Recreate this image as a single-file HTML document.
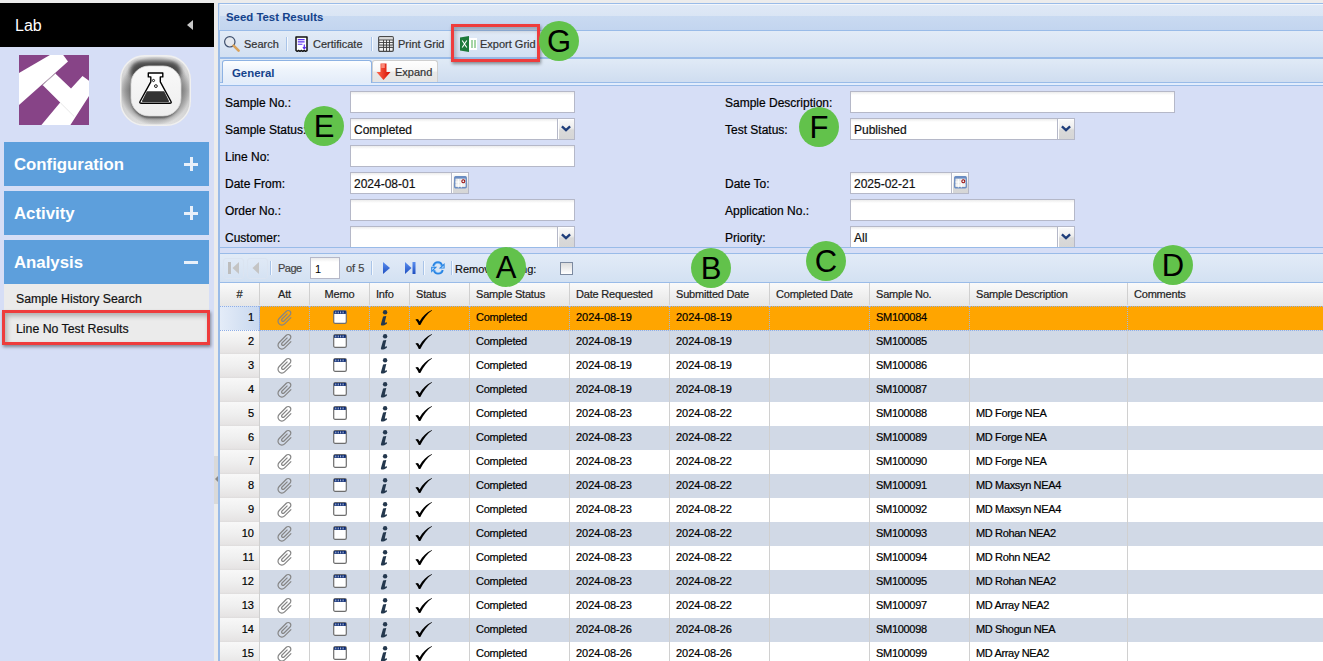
<!DOCTYPE html>
<html><head><meta charset="utf-8">
<style>
*{box-sizing:border-box}
html,body{margin:0;padding:0}
body{width:1323px;height:661px;overflow:hidden;position:relative;background:#ececec;font-family:"Liberation Sans",sans-serif;}
.a{position:absolute}
.hl{position:absolute;height:1px;background:#99bbe8}
/* sidebar */
#side{position:absolute;left:0;top:3px;width:214px;height:658px;background:#d6def6}
.acc{position:absolute;left:4px;width:205px;height:44px;background:#5d9fdc;color:#fff;font-weight:bold;font-size:16.8px}
.acc .t{position:absolute;left:10px;top:13px;line-height:20px}
.acc .pl{position:absolute;left:180px;top:15px;width:14px;height:14px}
.acc .pl:before{content:"";position:absolute;left:0;top:5.5px;width:14px;height:3px;background:#e8f0fa}
.acc .pl.plus:after{content:"";position:absolute;left:5.5px;top:0;width:3px;height:14px;background:#e8f0fa}
.mi{position:absolute;left:4px;width:205px;background:#ebebeb;color:#111;font-size:12.3px}
.mi .t{position:absolute;left:12px;line-height:15px}
.tb{position:absolute;font-size:11px;color:#333;line-height:13px;white-space:nowrap}
.tsep{position:absolute;width:2px;border-left:1px solid #a9c4e8;border-right:1px solid #f4f8fd}
.lb{position:absolute;font-size:12px;color:#000;line-height:14px;white-space:nowrap}
.in{position:absolute;height:22px;background:#fff linear-gradient(#ececec 0,#fff 3px);border:1px solid #b5b8c8;font-size:12px;color:#111;line-height:14px;padding:4px 0 0 3px;white-space:nowrap}
.trig{position:absolute;top:-1px;right:-1px;width:18px;height:22px;border:1px solid #b5b8c8;background:linear-gradient(#fbfbfb 0,#ededed 45%,#d9d9d9 55%,#d6d6d6 100%);box-shadow:inset 1px 1px 0 #fff}

.cal{position:absolute;top:-1px;width:18px;height:22px;border:1px solid #b5b8c8;background:linear-gradient(#fbfbfb 0,#ededed 45%,#d9d9d9 55%,#d6d6d6 100%);box-shadow:inset 1px 1px 0 #fff}
.hc{position:absolute;top:283px;height:22px;font-size:11px;color:#222;line-height:13px;padding-top:5px;white-space:nowrap;letter-spacing:-0.2px}
.hsep{position:absolute;top:283px;width:1px;height:22px;background:#d0d0d0}
.row{position:absolute;left:220px;width:1103px;height:24px}
.row.wht{background:#fff}
.row.alt{background:#d1d9e6}
.row.sel{background:#ffa500}
.rn{position:absolute;left:0;top:0;width:39px;height:24px;background:linear-gradient(#f8f8f8 0,#efefef 50%,#e6e4e4 92%,#dedcdc 100%)}
.sel .rn{background:linear-gradient(90deg,#e4ecf8,#c8d8ef)}
.rn span{position:absolute;right:5px;top:5px;font-size:11px;line-height:13px;color:#000}
.cl{position:absolute;top:0;width:1px;height:24px;background:#d0d0d0}
.tx{position:absolute;top:5px;font-size:11px;line-height:13px;color:#000;white-space:nowrap}
.ic{position:absolute}
.tx,.hc,.lb,.in,.tb,.rn span,.mi .t{-webkit-text-stroke:0.2px currentColor}
.co{position:absolute;width:40px;height:40px;border-radius:50%;background:#62c24b;color:#000;font-size:31px;line-height:42px;text-align:center}
.rbox{position:absolute;border:3px solid #ee3c3c;box-shadow:1px 2px 3px rgba(0,0,0,.4), inset 2px 3px 5px rgba(0,0,0,.26)}
</style></head><body>
<!-- ===== SIDEBAR ===== -->
<div id="side">
  <div class="a" style="left:0;top:0;width:214px;height:44px;background:#000"></div>
  <div class="a" style="left:15px;top:14px;color:#fff;font-size:16px;line-height:18px">Lab</div>
  <div class="a" style="left:187px;top:17px;width:0;height:0;border-top:5px solid transparent;border-bottom:5px solid transparent;border-right:6px solid #c8c8c8"></div>
  <svg class="a" style="left:19px;top:52px" width="70" height="70" viewBox="0 0 70 70">
    <rect width="70" height="70" fill="#874487"/>
    <path d="M0 17.9 L30.9 0 L44.2 0 L49 6.4 L0 50 Z" fill="#fff"/>
    <path d="M36.3 18.5 L52 33.6 L63.5 20.9 L70 25.8 L70 40.9 L51.4 70 L22.4 70 L41.2 47.6 L23.6 30 Z" fill="#fff"/>
    <path d="M23.6 30 L36.3 18.5" stroke="#bbb" stroke-width="1"/>
    <path d="M41.2 47.6 L55.2 61.5" stroke="#ddd" stroke-width="0.7"/>
  </svg>
  <svg class="a" style="left:120px;top:52px" width="71" height="71" viewBox="0 0 71 71">
    <defs>
      <filter id="bl" x="-30%" y="-30%" width="160%" height="160%"><feGaussianBlur stdDeviation="2.2"/></filter>
      <filter id="bl2" x="-30%" y="-30%" width="160%" height="160%"><feGaussianBlur stdDeviation="1.3"/></filter>
      <linearGradient id="inn" x1="0" y1="0" x2="0" y2="1"><stop offset="0" stop-color="#f9f9f9"/><stop offset="1" stop-color="#eeeeee"/></linearGradient>
      <linearGradient id="ring" x1="0" y1="0" x2="0" y2="1"><stop offset="0" stop-color="#dcdcdc"/><stop offset="0.5" stop-color="#a4a4a4"/><stop offset="1" stop-color="#d0d0d0"/></linearGradient>
      <radialGradient id="ring2" cx="0.5" cy="0.5" r="0.5"><stop offset="0.72" stop-color="#000" stop-opacity="0.25"/><stop offset="1" stop-color="#fff" stop-opacity="0.35"/></radialGradient>
      <clipPath id="oc"><rect x="0.5" y="0.5" width="70" height="70" rx="24"/></clipPath>
    </defs>
    <rect x="0.5" y="0.5" width="70" height="70" rx="24" fill="url(#ring)"/>
    <rect x="0.5" y="0.5" width="70" height="70" rx="24" fill="url(#ring2)"/>
    <g clip-path="url(#oc)">
      <rect x="10" y="6" width="51" height="20" rx="10" fill="#303030" opacity="0.8" filter="url(#bl)"/>
      <rect x="11.5" y="14" width="48" height="49" rx="18" fill="#303030" opacity="0.75" filter="url(#bl2)"/>
    </g>
    <rect x="0.7" y="0.7" width="69.6" height="69.6" rx="24" fill="none" stroke="#f0f0f0" stroke-width="1.4"/>
    <rect x="11" y="11" width="50" height="50" rx="18" fill="url(#inn)" stroke="#d8d8d8" stroke-width="0.8"/>
    <path d="M28.3 18 H42.8 V21.9 H40.3 V26.8 L51 46.5 C51.6 47.7 51 48.3 49.8 48.3 H21.3 C20 48.3 19.4 47.7 20 46.5 L30.8 26.8 V21.9 H28.3 Z" fill="#fff" stroke="#000" stroke-width="1.4" stroke-linejoin="round"/>
    <path d="M26.9 36.2 H44.2 L48.9 45.8 C49.2 46.5 49 46.9 48.3 46.9 H22.7 C22 46.9 21.8 46.5 22.1 45.8 Z" fill="#333"/>
    <circle cx="33.5" cy="25.5" r="1.1" fill="none" stroke="#000" stroke-width="0.9"/>
    <circle cx="35.9" cy="31.1" r="1.4" fill="none" stroke="#000" stroke-width="0.9"/>
  </svg>
  <div class="acc" style="top:139px"><div class="t">Configuration</div><div class="pl plus"></div></div>
  <div class="acc" style="top:188px"><div class="t">Activity</div><div class="pl plus"></div></div>
  <div class="acc" style="top:237px"><div class="t">Analysis</div><div class="pl"></div></div>
  <div class="mi" style="top:281px;height:26px"><div class="t" style="top:8px">Sample History Search</div></div>
  <div class="mi" style="top:307px;height:34px"><div class="t" style="top:12px">Line No Test Results</div></div>
  <div class="rbox" style="left:2px;top:307px;width:208px;height:35px"></div>
</div>
<!-- splitter -->
<div class="a" style="left:214px;top:3px;width:4px;height:658px;background:#ececec"></div>
<div class="a" style="left:214px;top:456px;width:4px;height:48px;background:#d9d9d9"></div>
<div class="a" style="left:215px;top:476px;width:0;height:0;border-top:3.5px solid transparent;border-bottom:3.5px solid transparent;border-right:3px solid #8a8a8a"></div>
<!-- ===== MAIN ===== -->
<div class="a" style="left:218px;top:3px;width:2px;height:658px;background:#99bbe8"></div>
<div class="a" style="left:220px;top:3px;width:1103px;height:658px;background:#d6def6"></div>
<!-- title -->
<div class="hl" style="left:220px;top:3px;width:1103px"></div>
<div class="a" style="left:220px;top:4px;width:1103px;height:26px;background:linear-gradient(#dfe9f6 0,#dae5f4 45%,#c9daf1 46%,#c3d5ef 100%)"></div>
<div class="a" style="left:219px;top:4px;width:1104px;height:1px;background:#f2f6fc"></div>
<div class="a" style="left:219px;top:4px;width:1px;height:26px;background:#d0e0f4"></div>
<div class="hl" style="left:220px;top:30px;width:1103px"></div>
<div class="a" style="left:226px;top:11px;font-weight:bold;color:#15428b;font-size:11.4px;line-height:13px">Seed Test Results</div>
<!-- toolbar -->
<div class="a" style="left:220px;top:31px;width:1103px;height:26px;background:linear-gradient(#e2ebf7,#d2e0f2)"></div>
<div class="hl" style="left:220px;top:57px;width:1103px;height:2px"></div>
<svg class="ic" style="left:223px;top:35px" width="18" height="18" viewBox="0 0 18 18"><circle cx="6.8" cy="6.8" r="5.2" fill="#e4e8ee" stroke="#3e4f6d" stroke-width="1.2"/><path d="M10.6 10.6 L15.6 15.6" stroke="#d9a25a" stroke-width="2.6" stroke-linecap="round"/></svg>
<div class="tb" style="left:244px;top:38px">Search</div>
<div class="tsep" style="left:286px;top:37px;height:14px"></div>
<svg class="ic" style="left:295px;top:36px" width="13" height="16" viewBox="0 0 13 16"><path d="M1 1 H12 V14.5 L10.6 15.3 L9.2 14.5 L7.8 15.3 L6.4 14.5 L5 15.3 L3.6 14.5 L2.2 15.3 L1 14.5 Z" fill="#fff" stroke="#111" stroke-width="1.5" stroke-linejoin="round"/><path d="M2.8 3.6 H9.6 M2.8 5.9 H9.6 M2.8 8.2 H7.4" stroke="#5a2ef0" stroke-width="1.1"/><path d="M9.3 8.6 V12.8 M7.9 11.2 L9.3 12.8 L10.7 11.2" stroke="#5a2ef0" stroke-width="1.2" fill="none"/></svg>
<div class="tb" style="left:313px;top:38px">Certificate</div>
<div class="tsep" style="left:371px;top:37px;height:14px"></div>
<svg class="ic" style="left:378px;top:36px" width="16" height="16" viewBox="0 0 16 16"><rect x="0.7" y="0.7" width="14.6" height="14.6" rx="1.2" fill="#f2f2f2" stroke="#4a4a4a" stroke-width="1.3"/><rect x="1.3" y="1.3" width="13.4" height="2.6" fill="#d8d8d8"/><rect x="1.3" y="9" width="13.4" height="2.5" fill="#d0d0d0"/><path d="M1 4 H15 M1 6.5 H15 M1 9 H15 M1 11.5 H15 M5.5 4 V15 M8.5 4 V15 M11.5 4 V15" stroke="#3c3c3c" stroke-width="0.9"/></svg>
<div class="tb" style="left:398px;top:38px">Print Grid</div>
<div class="tsep" style="left:452px;top:37px;height:14px"></div>
<svg class="ic" style="left:460px;top:36px" width="18" height="16" viewBox="0 0 18 16"><rect x="6" y="2" width="11" height="12" fill="#fff"/><path d="M12 4 V12 M15 4 V12" stroke="#8fcb8f" stroke-width="1.6"/><path d="M0 1.5 L9 0 L9 16 L0 14.5 Z" fill="#1d7a3a"/><path d="M2.2 4.5 L6.8 11.5 M6.8 4.5 L2.2 11.5" stroke="#fff" stroke-width="1.1"/></svg>
<div class="tb" style="left:480px;top:38px">Export Grid</div>
<!-- tabs -->
<div class="a" style="left:220px;top:59px;width:1103px;height:23px;background:linear-gradient(#e0eaf6,#cfddf0)"></div>
<div class="hl" style="left:220px;top:82px;width:1103px"></div>
<div class="a" style="left:220px;top:83px;width:1103px;height:2px;background:#e2edfd"></div>
<div class="hl" style="left:220px;top:85px;width:1103px"></div>
<div class="a" style="left:222px;top:60px;width:150px;height:23px;border:1px solid #8db2e3;border-bottom:none;border-radius:3px 3px 0 0;background:linear-gradient(#fdfeff 0,#eef4fc 40%,#e3ecf9 100%)"></div>
<div class="a" style="left:232px;top:67px;font-weight:bold;color:#15428b;font-size:11.4px;line-height:13px">General</div>
<div class="a" style="left:372px;top:60px;width:66px;height:22px;border:1px solid #cfcfcf;border-bottom:none;border-radius:3px 3px 0 0;background:linear-gradient(#fefefe 0,#f7f7f7 48%,#e9e9e9 52%,#e4e4e4 100%)"></div>
<svg class="ic" style="left:376px;top:63px" width="15" height="18" viewBox="0 0 15 18"><defs><linearGradient id="rg" x1="0" y1="0" x2="1" y2="0"><stop offset="0" stop-color="#ff6a50"/><stop offset="1" stop-color="#d40c00"/></linearGradient></defs><path d="M4.5 0.5 H10.5 V9 H14.5 L7.5 17 L0.5 9 H4.5 Z" fill="url(#rg)"/><rect x="5.3" y="1" width="3.5" height="4" fill="#ff9c8c" opacity="0.8"/></svg>
<div class="tb" style="left:395px;top:66px">Expand</div>
<!-- form -->
<div class="hl" style="left:220px;top:253px;width:1103px"></div>
<div class="lb" style="left:225px;top:96px">Sample No.:</div>
<div class="in" style="left:350px;top:91px;width:225px"></div>
<div class="lb" style="left:225px;top:123px">Sample Status:</div>
<div class="in" style="left:350px;top:118px;width:225px">Completed<div class="trig"><svg class="ic" style="left:3px;top:6px" width="10" height="7" viewBox="0 0 10 7"><path d="M0.9 1.3 L5 5.2 L9.1 1.3" stroke="#1e3d7a" stroke-width="2.3" fill="none"/></svg></div></div>
<div class="lb" style="left:225px;top:150px">Line No:</div>
<div class="in" style="left:350px;top:145px;width:225px"></div>
<div class="lb" style="left:225px;top:177px">Date From:</div>
<div class="in" style="left:350px;top:172px;width:119px">2024-08-01<div class="cal" style="right:-1px"><svg class="ic" style="left:2px;top:3px" width="13" height="13" viewBox="0 0 13 13"><rect x="0.75" y="0.75" width="11.5" height="11" rx="1" fill="#e8e8e8" stroke="#6a8cc2" stroke-width="1.4"/><rect x="1" y="0.6" width="11" height="2" fill="#6a8cc2"/><path d="M1.5 6 H11.5 M1.5 9 H11.5 M4.3 3 V11.5 M7.3 3 V11.5" stroke="#fff" stroke-width="1"/><circle cx="9.3" cy="5.2" r="1.5" fill="none" stroke="#9a0e0e" stroke-width="1.1"/></svg></div></div>
<div class="lb" style="left:225px;top:204px">Order No.:</div>
<div class="in" style="left:350px;top:199px;width:225px"></div>
<div class="lb" style="left:225px;top:231px">Customer:</div>
<div class="in" style="left:350px;top:226px;width:225px;height:22px"><div class="trig" style="height:23px;height:22px"><svg class="ic" style="left:3px;top:6px" width="10" height="7" viewBox="0 0 10 7"><path d="M0.9 1.3 L5 5.2 L9.1 1.3" stroke="#1e3d7a" stroke-width="2.3" fill="none"/></svg></div></div>

<div class="lb" style="left:725px;top:96px">Sample Description:</div>
<div class="in" style="left:850px;top:91px;width:325px"></div>
<div class="lb" style="left:725px;top:123px">Test Status:</div>
<div class="in" style="left:850px;top:118px;width:225px">Published<div class="trig"><svg class="ic" style="left:3px;top:6px" width="10" height="7" viewBox="0 0 10 7"><path d="M0.9 1.3 L5 5.2 L9.1 1.3" stroke="#1e3d7a" stroke-width="2.3" fill="none"/></svg></div></div>
<div class="lb" style="left:725px;top:177px">Date To:</div>
<div class="in" style="left:850px;top:172px;width:119px">2025-02-21<div class="cal" style="right:-1px"><svg class="ic" style="left:2px;top:3px" width="13" height="13" viewBox="0 0 13 13"><rect x="0.75" y="0.75" width="11.5" height="11" rx="1" fill="#e8e8e8" stroke="#6a8cc2" stroke-width="1.4"/><rect x="1" y="0.6" width="11" height="2" fill="#6a8cc2"/><path d="M1.5 6 H11.5 M1.5 9 H11.5 M4.3 3 V11.5 M7.3 3 V11.5" stroke="#fff" stroke-width="1"/><circle cx="9.3" cy="5.2" r="1.5" fill="none" stroke="#9a0e0e" stroke-width="1.1"/></svg></div></div>
<div class="lb" style="left:725px;top:204px">Application No.:</div>
<div class="in" style="left:850px;top:199px;width:225px"></div>
<div class="lb" style="left:725px;top:231px">Priority:</div>
<div class="in" style="left:850px;top:226px;width:225px;height:22px">All<div class="trig" style="height:23px;height:22px"><svg class="ic" style="left:3px;top:6px" width="10" height="7" viewBox="0 0 10 7"><path d="M0.9 1.3 L5 5.2 L9.1 1.3" stroke="#1e3d7a" stroke-width="2.3" fill="none"/></svg></div></div>
<div class="hl" style="left:220px;top:247px;width:1103px"></div>
<!-- paging -->
<div class="a" style="left:220px;top:254px;width:1103px;height:28px;background:linear-gradient(#e2ebf7,#d3e1f2)"></div>
<div class="hl" style="left:220px;top:282px;width:1103px"></div>
<div class="a" style="left:223px;top:258px;width:21px;height:21px;border:1px solid #dbe4f1;border-radius:3px"></div>
<div class="a" style="left:247px;top:258px;width:21px;height:21px;border:1px solid #dbe4f1;border-radius:3px"></div>
<svg class="ic" style="left:228px;top:262px" width="12" height="12" viewBox="0 0 12 12"><rect x="0" y="0" width="3" height="12" fill="#bdbdbd"/><path d="M11 0 L11 12 L4.5 6 Z" fill="#c4c4c4"/></svg>
<svg class="ic" style="left:252px;top:262px" width="8" height="12" viewBox="0 0 8 12"><path d="M7 0 L7 12 L0.5 6 Z" fill="#c4c4c4"/></svg>
<div class="tsep" style="left:270px;top:261px;height:14px"></div>
<div class="tb" style="left:278px;top:262px;color:#444;letter-spacing:-0.5px">Page</div>
<div class="a" style="left:310px;top:257px;width:30px;height:22px;border:1px solid #b5b8c8;background:linear-gradient(#ececec,#fff 4px);font-size:11px;line-height:13px;padding:5px 0 0 4px;color:#000">1</div>
<div class="tb" style="left:346px;top:262px;color:#444">of 5</div>
<div class="tsep" style="left:371px;top:261px;height:14px"></div>
<svg class="ic" style="left:383px;top:262px" width="7" height="12" viewBox="0 0 7 12"><defs><linearGradient id="bt" x1="0" y1="0" x2="0" y2="1"><stop offset="0" stop-color="#5a8ef0"/><stop offset="1" stop-color="#1f4fc0"/></linearGradient></defs><path d="M0 0 L7 6 L0 12 Z" fill="url(#bt)"/></svg>
<svg class="ic" style="left:405px;top:262px" width="11" height="12" viewBox="0 0 11 12"><path d="M0 0 L6.5 6 L0 12 Z" fill="url(#bt)"/><rect x="7.5" y="0" width="3" height="12" fill="url(#bt)"/></svg>
<div class="tsep" style="left:423px;top:261px;height:14px"></div>
<svg class="ic" style="left:426px;top:256px" width="24" height="24" viewBox="0 0 24 24"><path d="M7.4 10.2 C8 7.6 9.8 6.3 12 6.3 C14 6.3 15.4 7.3 16 9.8" fill="none" stroke="#2784e4" stroke-width="2.2"/><path d="M8.4 9.8 C9 8.1 10.3 7.3 12 7.3 C13.5 7.3 14.5 8 15 9.6" fill="none" stroke="#a9d5fc" stroke-width="0.6"/><path d="M18.6 7 L18.6 12.6 L12.8 12.6 Z" fill="#2784e4"/><path d="M17.6 9.4 L17.6 11.7 L15.3 11.7 Z" fill="#b8ddfd"/><path d="M16.6 14 C16 16.6 14.2 17.5 12 17.5 C10 17.5 8.6 16.5 8 14.2" fill="none" stroke="#2784e4" stroke-width="2.2"/><path d="M15.6 14.4 C15 16 13.7 16.5 12 16.5 C10.5 16.5 9.5 15.9 9 14.5" fill="none" stroke="#a9d5fc" stroke-width="0.6"/><path d="M5.2 10.8 L5.2 16.8 L11.2 10.8 Z" fill="#2784e4"/><path d="M6.2 11.8 L6.2 14.2 L8.6 11.8 Z" fill="#b8ddfd"/></svg>
<div class="tsep" style="left:451px;top:261px;height:14px"></div>
<div class="tb" style="left:455px;top:263px;color:#111">Remove Paging:</div>
<div class="a" style="left:560px;top:262px;width:13px;height:13px;border:1px solid #7c8aa0;background:linear-gradient(#dcdcdc,#fff)"></div>
<!-- header -->
<div class="a" style="left:220px;top:283px;width:1103px;height:23px;background:linear-gradient(#fafafa,#e6e6e6)"></div>
<div class="hc" style="left:220px;width:39px;text-align:center">#</div>
<div class="hsep" style="left:259px"></div>
<div class="hc" style="left:260px;width:49px;text-align:center">Att</div>
<div class="hsep" style="left:309px"></div>
<div class="hc" style="left:310px;width:59px;text-align:center">Memo</div>
<div class="hsep" style="left:369px"></div>
<div class="hc" style="left:376px">Info</div>
<div class="hsep" style="left:409px"></div>
<div class="hc" style="left:416px">Status</div>
<div class="hsep" style="left:469px"></div>
<div class="hc" style="left:476px">Sample Status</div>
<div class="hsep" style="left:569px"></div>
<div class="hc" style="left:576px">Date Requested</div>
<div class="hsep" style="left:669px"></div>
<div class="hc" style="left:676px">Submitted Date</div>
<div class="hsep" style="left:769px"></div>
<div class="hc" style="left:776px">Completed Date</div>
<div class="hsep" style="left:869px"></div>
<div class="hc" style="left:876px">Sample No.</div>
<div class="hsep" style="left:969px"></div>
<div class="hc" style="left:976px">Sample Description</div>
<div class="hsep" style="left:1127px"></div>
<div class="hc" style="left:1134px">Comments</div>
<div class="row sel" style="top:306px">
<div class="rn"><span>1</span></div>
<div class="a" style="left:39px;top:0;width:1px;height:24px;border-left:1px dotted #9db6e6"></div>
<div class="a" style="left:89px;top:0;width:1px;height:24px;border-left:1px dotted #9db6e6"></div>
<div class="a" style="left:149px;top:0;width:1px;height:24px;border-left:1px dotted #9db6e6"></div>
<div class="a" style="left:189px;top:0;width:1px;height:24px;border-left:1px dotted #9db6e6"></div>
<div class="a" style="left:249px;top:0;width:1px;height:24px;border-left:1px dotted #9db6e6"></div>
<div class="a" style="left:349px;top:0;width:1px;height:24px;border-left:1px dotted #9db6e6"></div>
<div class="a" style="left:449px;top:0;width:1px;height:24px;border-left:1px dotted #9db6e6"></div>
<div class="a" style="left:549px;top:0;width:1px;height:24px;border-left:1px dotted #9db6e6"></div>
<div class="a" style="left:649px;top:0;width:1px;height:24px;border-left:1px dotted #9db6e6"></div>
<div class="a" style="left:749px;top:0;width:1px;height:24px;border-left:1px dotted #9db6e6"></div>
<div class="a" style="left:907px;top:0;width:1px;height:24px;border-left:1px dotted #9db6e6"></div>
</div>
<svg class="ic" style="left:275.2px;top:308.2px" width="19.5" height="19.5" viewBox="0 0 24 24"><path transform="rotate(45 12 12)" d="M16.5 6v11.5c0 2.21-1.79 4-4 4s-4-1.79-4-4V5c0-1.38 1.12-2.5 2.5-2.5s2.5 1.12 2.5 2.5v10.5c0 .55-.45 1-1 1s-1-.45-1-1V6H10v9.5c0 1.38 1.12 2.5 2.5 2.5s2.5-1.12 2.5-2.5V5c0-2.21-1.79-4-4-4S7 2.79 7 5v12.5c0 3.04 2.46 5.5 5.5 5.5s5.5-2.46 5.5-5.5V6h-1.5z" fill="#858585"/></svg>
<svg class="ic" style="left:333px;top:310px" width="14" height="14" viewBox="0 0 15 15"><rect x="0.75" y="0.75" width="13.5" height="13.5" rx="1.5" fill="#fff" stroke="#6e6e6e" stroke-width="1.3"/><rect x="1.2" y="1" width="12.6" height="3.2" fill="#0b2a73"/><path d="M3 1.6 V3.6 M5.6 1.6 V3.6 M8.2 1.6 V3.6 M10.8 1.6 V3.6" stroke="#dfe6f5" stroke-width="0.9"/></svg>
<svg class="ic" style="left:379px;top:310px" width="12" height="20" viewBox="0 0 12 20"><circle cx="6.1" cy="2.3" r="2.2" fill="#24384e"/><path d="M4.1 6.4 L7.3 5.9 L5.8 12.3 C5.7 12.9 6.1 13 8 12.3 L7.8 13.7 C6.1 15 4.1 15.7 2.6 15.6 C1.8 15.5 1.8 14.6 2.1 13.6 Z" fill="#24384e"/></svg>
<svg class="ic" style="left:415px;top:310px" width="18" height="17" viewBox="0 0 18 17"><path d="M0.4 9.7 C1.3 8.8 2.6 8.6 3.4 9.5 L4.6 11.4 C7.5 6.3 11.5 2.3 16.9 0 L17 0.4 C12.5 3.4 8.5 8.3 5.3 15 L3.8 15.1 C2.9 12.8 1.9 11.1 0.4 9.7 Z" fill="#000"/></svg>
<div class="tx" style="left:476px;top:311px;letter-spacing:-0.25px">Completed</div>
<div class="tx" style="left:576px;top:311px;letter-spacing:-0.05px">2024-08-19</div>
<div class="tx" style="left:676px;top:311px;letter-spacing:-0.05px">2024-08-19</div>
<div class="tx" style="left:876px;top:311px;letter-spacing:-0.3px">SM100084</div>
<div class="row alt" style="top:330px">
<div class="rn"><span>2</span></div>
<div class="cl" style="left:39px"></div>
<div class="cl" style="left:89px"></div>
<div class="cl" style="left:149px"></div>
<div class="cl" style="left:189px"></div>
<div class="cl" style="left:249px"></div>
<div class="cl" style="left:349px"></div>
<div class="cl" style="left:449px"></div>
<div class="cl" style="left:549px"></div>
<div class="cl" style="left:649px"></div>
<div class="cl" style="left:749px"></div>
<div class="cl" style="left:907px"></div>
</div>
<svg class="ic" style="left:275.2px;top:332.2px" width="19.5" height="19.5" viewBox="0 0 24 24"><path transform="rotate(45 12 12)" d="M16.5 6v11.5c0 2.21-1.79 4-4 4s-4-1.79-4-4V5c0-1.38 1.12-2.5 2.5-2.5s2.5 1.12 2.5 2.5v10.5c0 .55-.45 1-1 1s-1-.45-1-1V6H10v9.5c0 1.38 1.12 2.5 2.5 2.5s2.5-1.12 2.5-2.5V5c0-2.21-1.79-4-4-4S7 2.79 7 5v12.5c0 3.04 2.46 5.5 5.5 5.5s5.5-2.46 5.5-5.5V6h-1.5z" fill="#858585"/></svg>
<svg class="ic" style="left:333px;top:334px" width="14" height="14" viewBox="0 0 15 15"><rect x="0.75" y="0.75" width="13.5" height="13.5" rx="1.5" fill="#fff" stroke="#6e6e6e" stroke-width="1.3"/><rect x="1.2" y="1" width="12.6" height="3.2" fill="#0b2a73"/><path d="M3 1.6 V3.6 M5.6 1.6 V3.6 M8.2 1.6 V3.6 M10.8 1.6 V3.6" stroke="#dfe6f5" stroke-width="0.9"/></svg>
<svg class="ic" style="left:379px;top:334px" width="12" height="20" viewBox="0 0 12 20"><circle cx="6.1" cy="2.3" r="2.2" fill="#24384e"/><path d="M4.1 6.4 L7.3 5.9 L5.8 12.3 C5.7 12.9 6.1 13 8 12.3 L7.8 13.7 C6.1 15 4.1 15.7 2.6 15.6 C1.8 15.5 1.8 14.6 2.1 13.6 Z" fill="#24384e"/></svg>
<svg class="ic" style="left:415px;top:334px" width="18" height="17" viewBox="0 0 18 17"><path d="M0.4 9.7 C1.3 8.8 2.6 8.6 3.4 9.5 L4.6 11.4 C7.5 6.3 11.5 2.3 16.9 0 L17 0.4 C12.5 3.4 8.5 8.3 5.3 15 L3.8 15.1 C2.9 12.8 1.9 11.1 0.4 9.7 Z" fill="#000"/></svg>
<div class="tx" style="left:476px;top:335px;letter-spacing:-0.25px">Completed</div>
<div class="tx" style="left:576px;top:335px;letter-spacing:-0.05px">2024-08-19</div>
<div class="tx" style="left:676px;top:335px;letter-spacing:-0.05px">2024-08-19</div>
<div class="tx" style="left:876px;top:335px;letter-spacing:-0.3px">SM100085</div>
<div class="row wht" style="top:354px">
<div class="rn"><span>3</span></div>
<div class="cl" style="left:39px"></div>
<div class="cl" style="left:89px"></div>
<div class="cl" style="left:149px"></div>
<div class="cl" style="left:189px"></div>
<div class="cl" style="left:249px"></div>
<div class="cl" style="left:349px"></div>
<div class="cl" style="left:449px"></div>
<div class="cl" style="left:549px"></div>
<div class="cl" style="left:649px"></div>
<div class="cl" style="left:749px"></div>
<div class="cl" style="left:907px"></div>
</div>
<svg class="ic" style="left:275.2px;top:356.2px" width="19.5" height="19.5" viewBox="0 0 24 24"><path transform="rotate(45 12 12)" d="M16.5 6v11.5c0 2.21-1.79 4-4 4s-4-1.79-4-4V5c0-1.38 1.12-2.5 2.5-2.5s2.5 1.12 2.5 2.5v10.5c0 .55-.45 1-1 1s-1-.45-1-1V6H10v9.5c0 1.38 1.12 2.5 2.5 2.5s2.5-1.12 2.5-2.5V5c0-2.21-1.79-4-4-4S7 2.79 7 5v12.5c0 3.04 2.46 5.5 5.5 5.5s5.5-2.46 5.5-5.5V6h-1.5z" fill="#858585"/></svg>
<svg class="ic" style="left:333px;top:358px" width="14" height="14" viewBox="0 0 15 15"><rect x="0.75" y="0.75" width="13.5" height="13.5" rx="1.5" fill="#fff" stroke="#6e6e6e" stroke-width="1.3"/><rect x="1.2" y="1" width="12.6" height="3.2" fill="#0b2a73"/><path d="M3 1.6 V3.6 M5.6 1.6 V3.6 M8.2 1.6 V3.6 M10.8 1.6 V3.6" stroke="#dfe6f5" stroke-width="0.9"/></svg>
<svg class="ic" style="left:379px;top:358px" width="12" height="20" viewBox="0 0 12 20"><circle cx="6.1" cy="2.3" r="2.2" fill="#24384e"/><path d="M4.1 6.4 L7.3 5.9 L5.8 12.3 C5.7 12.9 6.1 13 8 12.3 L7.8 13.7 C6.1 15 4.1 15.7 2.6 15.6 C1.8 15.5 1.8 14.6 2.1 13.6 Z" fill="#24384e"/></svg>
<svg class="ic" style="left:415px;top:358px" width="18" height="17" viewBox="0 0 18 17"><path d="M0.4 9.7 C1.3 8.8 2.6 8.6 3.4 9.5 L4.6 11.4 C7.5 6.3 11.5 2.3 16.9 0 L17 0.4 C12.5 3.4 8.5 8.3 5.3 15 L3.8 15.1 C2.9 12.8 1.9 11.1 0.4 9.7 Z" fill="#000"/></svg>
<div class="tx" style="left:476px;top:359px;letter-spacing:-0.25px">Completed</div>
<div class="tx" style="left:576px;top:359px;letter-spacing:-0.05px">2024-08-19</div>
<div class="tx" style="left:676px;top:359px;letter-spacing:-0.05px">2024-08-19</div>
<div class="tx" style="left:876px;top:359px;letter-spacing:-0.3px">SM100086</div>
<div class="row alt" style="top:378px">
<div class="rn"><span>4</span></div>
<div class="cl" style="left:39px"></div>
<div class="cl" style="left:89px"></div>
<div class="cl" style="left:149px"></div>
<div class="cl" style="left:189px"></div>
<div class="cl" style="left:249px"></div>
<div class="cl" style="left:349px"></div>
<div class="cl" style="left:449px"></div>
<div class="cl" style="left:549px"></div>
<div class="cl" style="left:649px"></div>
<div class="cl" style="left:749px"></div>
<div class="cl" style="left:907px"></div>
</div>
<svg class="ic" style="left:275.2px;top:380.2px" width="19.5" height="19.5" viewBox="0 0 24 24"><path transform="rotate(45 12 12)" d="M16.5 6v11.5c0 2.21-1.79 4-4 4s-4-1.79-4-4V5c0-1.38 1.12-2.5 2.5-2.5s2.5 1.12 2.5 2.5v10.5c0 .55-.45 1-1 1s-1-.45-1-1V6H10v9.5c0 1.38 1.12 2.5 2.5 2.5s2.5-1.12 2.5-2.5V5c0-2.21-1.79-4-4-4S7 2.79 7 5v12.5c0 3.04 2.46 5.5 5.5 5.5s5.5-2.46 5.5-5.5V6h-1.5z" fill="#858585"/></svg>
<svg class="ic" style="left:333px;top:382px" width="14" height="14" viewBox="0 0 15 15"><rect x="0.75" y="0.75" width="13.5" height="13.5" rx="1.5" fill="#fff" stroke="#6e6e6e" stroke-width="1.3"/><rect x="1.2" y="1" width="12.6" height="3.2" fill="#0b2a73"/><path d="M3 1.6 V3.6 M5.6 1.6 V3.6 M8.2 1.6 V3.6 M10.8 1.6 V3.6" stroke="#dfe6f5" stroke-width="0.9"/></svg>
<svg class="ic" style="left:379px;top:382px" width="12" height="20" viewBox="0 0 12 20"><circle cx="6.1" cy="2.3" r="2.2" fill="#24384e"/><path d="M4.1 6.4 L7.3 5.9 L5.8 12.3 C5.7 12.9 6.1 13 8 12.3 L7.8 13.7 C6.1 15 4.1 15.7 2.6 15.6 C1.8 15.5 1.8 14.6 2.1 13.6 Z" fill="#24384e"/></svg>
<svg class="ic" style="left:415px;top:382px" width="18" height="17" viewBox="0 0 18 17"><path d="M0.4 9.7 C1.3 8.8 2.6 8.6 3.4 9.5 L4.6 11.4 C7.5 6.3 11.5 2.3 16.9 0 L17 0.4 C12.5 3.4 8.5 8.3 5.3 15 L3.8 15.1 C2.9 12.8 1.9 11.1 0.4 9.7 Z" fill="#000"/></svg>
<div class="tx" style="left:476px;top:383px;letter-spacing:-0.25px">Completed</div>
<div class="tx" style="left:576px;top:383px;letter-spacing:-0.05px">2024-08-19</div>
<div class="tx" style="left:676px;top:383px;letter-spacing:-0.05px">2024-08-19</div>
<div class="tx" style="left:876px;top:383px;letter-spacing:-0.3px">SM100087</div>
<div class="row wht" style="top:402px">
<div class="rn"><span>5</span></div>
<div class="cl" style="left:39px"></div>
<div class="cl" style="left:89px"></div>
<div class="cl" style="left:149px"></div>
<div class="cl" style="left:189px"></div>
<div class="cl" style="left:249px"></div>
<div class="cl" style="left:349px"></div>
<div class="cl" style="left:449px"></div>
<div class="cl" style="left:549px"></div>
<div class="cl" style="left:649px"></div>
<div class="cl" style="left:749px"></div>
<div class="cl" style="left:907px"></div>
</div>
<svg class="ic" style="left:275.2px;top:404.2px" width="19.5" height="19.5" viewBox="0 0 24 24"><path transform="rotate(45 12 12)" d="M16.5 6v11.5c0 2.21-1.79 4-4 4s-4-1.79-4-4V5c0-1.38 1.12-2.5 2.5-2.5s2.5 1.12 2.5 2.5v10.5c0 .55-.45 1-1 1s-1-.45-1-1V6H10v9.5c0 1.38 1.12 2.5 2.5 2.5s2.5-1.12 2.5-2.5V5c0-2.21-1.79-4-4-4S7 2.79 7 5v12.5c0 3.04 2.46 5.5 5.5 5.5s5.5-2.46 5.5-5.5V6h-1.5z" fill="#858585"/></svg>
<svg class="ic" style="left:333px;top:406px" width="14" height="14" viewBox="0 0 15 15"><rect x="0.75" y="0.75" width="13.5" height="13.5" rx="1.5" fill="#fff" stroke="#6e6e6e" stroke-width="1.3"/><rect x="1.2" y="1" width="12.6" height="3.2" fill="#0b2a73"/><path d="M3 1.6 V3.6 M5.6 1.6 V3.6 M8.2 1.6 V3.6 M10.8 1.6 V3.6" stroke="#dfe6f5" stroke-width="0.9"/></svg>
<svg class="ic" style="left:379px;top:406px" width="12" height="20" viewBox="0 0 12 20"><circle cx="6.1" cy="2.3" r="2.2" fill="#24384e"/><path d="M4.1 6.4 L7.3 5.9 L5.8 12.3 C5.7 12.9 6.1 13 8 12.3 L7.8 13.7 C6.1 15 4.1 15.7 2.6 15.6 C1.8 15.5 1.8 14.6 2.1 13.6 Z" fill="#24384e"/></svg>
<svg class="ic" style="left:415px;top:406px" width="18" height="17" viewBox="0 0 18 17"><path d="M0.4 9.7 C1.3 8.8 2.6 8.6 3.4 9.5 L4.6 11.4 C7.5 6.3 11.5 2.3 16.9 0 L17 0.4 C12.5 3.4 8.5 8.3 5.3 15 L3.8 15.1 C2.9 12.8 1.9 11.1 0.4 9.7 Z" fill="#000"/></svg>
<div class="tx" style="left:476px;top:407px;letter-spacing:-0.25px">Completed</div>
<div class="tx" style="left:576px;top:407px;letter-spacing:-0.05px">2024-08-23</div>
<div class="tx" style="left:676px;top:407px;letter-spacing:-0.05px">2024-08-22</div>
<div class="tx" style="left:876px;top:407px;letter-spacing:-0.3px">SM100088</div>
<div class="tx" style="left:976px;top:407px;letter-spacing:-0.35px">MD Forge NEA</div>
<div class="row alt" style="top:426px">
<div class="rn"><span>6</span></div>
<div class="cl" style="left:39px"></div>
<div class="cl" style="left:89px"></div>
<div class="cl" style="left:149px"></div>
<div class="cl" style="left:189px"></div>
<div class="cl" style="left:249px"></div>
<div class="cl" style="left:349px"></div>
<div class="cl" style="left:449px"></div>
<div class="cl" style="left:549px"></div>
<div class="cl" style="left:649px"></div>
<div class="cl" style="left:749px"></div>
<div class="cl" style="left:907px"></div>
</div>
<svg class="ic" style="left:275.2px;top:428.2px" width="19.5" height="19.5" viewBox="0 0 24 24"><path transform="rotate(45 12 12)" d="M16.5 6v11.5c0 2.21-1.79 4-4 4s-4-1.79-4-4V5c0-1.38 1.12-2.5 2.5-2.5s2.5 1.12 2.5 2.5v10.5c0 .55-.45 1-1 1s-1-.45-1-1V6H10v9.5c0 1.38 1.12 2.5 2.5 2.5s2.5-1.12 2.5-2.5V5c0-2.21-1.79-4-4-4S7 2.79 7 5v12.5c0 3.04 2.46 5.5 5.5 5.5s5.5-2.46 5.5-5.5V6h-1.5z" fill="#858585"/></svg>
<svg class="ic" style="left:333px;top:430px" width="14" height="14" viewBox="0 0 15 15"><rect x="0.75" y="0.75" width="13.5" height="13.5" rx="1.5" fill="#fff" stroke="#6e6e6e" stroke-width="1.3"/><rect x="1.2" y="1" width="12.6" height="3.2" fill="#0b2a73"/><path d="M3 1.6 V3.6 M5.6 1.6 V3.6 M8.2 1.6 V3.6 M10.8 1.6 V3.6" stroke="#dfe6f5" stroke-width="0.9"/></svg>
<svg class="ic" style="left:379px;top:430px" width="12" height="20" viewBox="0 0 12 20"><circle cx="6.1" cy="2.3" r="2.2" fill="#24384e"/><path d="M4.1 6.4 L7.3 5.9 L5.8 12.3 C5.7 12.9 6.1 13 8 12.3 L7.8 13.7 C6.1 15 4.1 15.7 2.6 15.6 C1.8 15.5 1.8 14.6 2.1 13.6 Z" fill="#24384e"/></svg>
<svg class="ic" style="left:415px;top:430px" width="18" height="17" viewBox="0 0 18 17"><path d="M0.4 9.7 C1.3 8.8 2.6 8.6 3.4 9.5 L4.6 11.4 C7.5 6.3 11.5 2.3 16.9 0 L17 0.4 C12.5 3.4 8.5 8.3 5.3 15 L3.8 15.1 C2.9 12.8 1.9 11.1 0.4 9.7 Z" fill="#000"/></svg>
<div class="tx" style="left:476px;top:431px;letter-spacing:-0.25px">Completed</div>
<div class="tx" style="left:576px;top:431px;letter-spacing:-0.05px">2024-08-23</div>
<div class="tx" style="left:676px;top:431px;letter-spacing:-0.05px">2024-08-22</div>
<div class="tx" style="left:876px;top:431px;letter-spacing:-0.3px">SM100089</div>
<div class="tx" style="left:976px;top:431px;letter-spacing:-0.35px">MD Forge NEA</div>
<div class="row wht" style="top:450px">
<div class="rn"><span>7</span></div>
<div class="cl" style="left:39px"></div>
<div class="cl" style="left:89px"></div>
<div class="cl" style="left:149px"></div>
<div class="cl" style="left:189px"></div>
<div class="cl" style="left:249px"></div>
<div class="cl" style="left:349px"></div>
<div class="cl" style="left:449px"></div>
<div class="cl" style="left:549px"></div>
<div class="cl" style="left:649px"></div>
<div class="cl" style="left:749px"></div>
<div class="cl" style="left:907px"></div>
</div>
<svg class="ic" style="left:275.2px;top:452.2px" width="19.5" height="19.5" viewBox="0 0 24 24"><path transform="rotate(45 12 12)" d="M16.5 6v11.5c0 2.21-1.79 4-4 4s-4-1.79-4-4V5c0-1.38 1.12-2.5 2.5-2.5s2.5 1.12 2.5 2.5v10.5c0 .55-.45 1-1 1s-1-.45-1-1V6H10v9.5c0 1.38 1.12 2.5 2.5 2.5s2.5-1.12 2.5-2.5V5c0-2.21-1.79-4-4-4S7 2.79 7 5v12.5c0 3.04 2.46 5.5 5.5 5.5s5.5-2.46 5.5-5.5V6h-1.5z" fill="#858585"/></svg>
<svg class="ic" style="left:333px;top:454px" width="14" height="14" viewBox="0 0 15 15"><rect x="0.75" y="0.75" width="13.5" height="13.5" rx="1.5" fill="#fff" stroke="#6e6e6e" stroke-width="1.3"/><rect x="1.2" y="1" width="12.6" height="3.2" fill="#0b2a73"/><path d="M3 1.6 V3.6 M5.6 1.6 V3.6 M8.2 1.6 V3.6 M10.8 1.6 V3.6" stroke="#dfe6f5" stroke-width="0.9"/></svg>
<svg class="ic" style="left:379px;top:454px" width="12" height="20" viewBox="0 0 12 20"><circle cx="6.1" cy="2.3" r="2.2" fill="#24384e"/><path d="M4.1 6.4 L7.3 5.9 L5.8 12.3 C5.7 12.9 6.1 13 8 12.3 L7.8 13.7 C6.1 15 4.1 15.7 2.6 15.6 C1.8 15.5 1.8 14.6 2.1 13.6 Z" fill="#24384e"/></svg>
<svg class="ic" style="left:415px;top:454px" width="18" height="17" viewBox="0 0 18 17"><path d="M0.4 9.7 C1.3 8.8 2.6 8.6 3.4 9.5 L4.6 11.4 C7.5 6.3 11.5 2.3 16.9 0 L17 0.4 C12.5 3.4 8.5 8.3 5.3 15 L3.8 15.1 C2.9 12.8 1.9 11.1 0.4 9.7 Z" fill="#000"/></svg>
<div class="tx" style="left:476px;top:455px;letter-spacing:-0.25px">Completed</div>
<div class="tx" style="left:576px;top:455px;letter-spacing:-0.05px">2024-08-23</div>
<div class="tx" style="left:676px;top:455px;letter-spacing:-0.05px">2024-08-22</div>
<div class="tx" style="left:876px;top:455px;letter-spacing:-0.3px">SM100090</div>
<div class="tx" style="left:976px;top:455px;letter-spacing:-0.35px">MD Forge NEA</div>
<div class="row alt" style="top:474px">
<div class="rn"><span>8</span></div>
<div class="cl" style="left:39px"></div>
<div class="cl" style="left:89px"></div>
<div class="cl" style="left:149px"></div>
<div class="cl" style="left:189px"></div>
<div class="cl" style="left:249px"></div>
<div class="cl" style="left:349px"></div>
<div class="cl" style="left:449px"></div>
<div class="cl" style="left:549px"></div>
<div class="cl" style="left:649px"></div>
<div class="cl" style="left:749px"></div>
<div class="cl" style="left:907px"></div>
</div>
<svg class="ic" style="left:275.2px;top:476.2px" width="19.5" height="19.5" viewBox="0 0 24 24"><path transform="rotate(45 12 12)" d="M16.5 6v11.5c0 2.21-1.79 4-4 4s-4-1.79-4-4V5c0-1.38 1.12-2.5 2.5-2.5s2.5 1.12 2.5 2.5v10.5c0 .55-.45 1-1 1s-1-.45-1-1V6H10v9.5c0 1.38 1.12 2.5 2.5 2.5s2.5-1.12 2.5-2.5V5c0-2.21-1.79-4-4-4S7 2.79 7 5v12.5c0 3.04 2.46 5.5 5.5 5.5s5.5-2.46 5.5-5.5V6h-1.5z" fill="#858585"/></svg>
<svg class="ic" style="left:333px;top:478px" width="14" height="14" viewBox="0 0 15 15"><rect x="0.75" y="0.75" width="13.5" height="13.5" rx="1.5" fill="#fff" stroke="#6e6e6e" stroke-width="1.3"/><rect x="1.2" y="1" width="12.6" height="3.2" fill="#0b2a73"/><path d="M3 1.6 V3.6 M5.6 1.6 V3.6 M8.2 1.6 V3.6 M10.8 1.6 V3.6" stroke="#dfe6f5" stroke-width="0.9"/></svg>
<svg class="ic" style="left:379px;top:478px" width="12" height="20" viewBox="0 0 12 20"><circle cx="6.1" cy="2.3" r="2.2" fill="#24384e"/><path d="M4.1 6.4 L7.3 5.9 L5.8 12.3 C5.7 12.9 6.1 13 8 12.3 L7.8 13.7 C6.1 15 4.1 15.7 2.6 15.6 C1.8 15.5 1.8 14.6 2.1 13.6 Z" fill="#24384e"/></svg>
<svg class="ic" style="left:415px;top:478px" width="18" height="17" viewBox="0 0 18 17"><path d="M0.4 9.7 C1.3 8.8 2.6 8.6 3.4 9.5 L4.6 11.4 C7.5 6.3 11.5 2.3 16.9 0 L17 0.4 C12.5 3.4 8.5 8.3 5.3 15 L3.8 15.1 C2.9 12.8 1.9 11.1 0.4 9.7 Z" fill="#000"/></svg>
<div class="tx" style="left:476px;top:479px;letter-spacing:-0.25px">Completed</div>
<div class="tx" style="left:576px;top:479px;letter-spacing:-0.05px">2024-08-23</div>
<div class="tx" style="left:676px;top:479px;letter-spacing:-0.05px">2024-08-22</div>
<div class="tx" style="left:876px;top:479px;letter-spacing:-0.3px">SM100091</div>
<div class="tx" style="left:976px;top:479px;letter-spacing:-0.35px">MD Maxsyn NEA4</div>
<div class="row wht" style="top:498px">
<div class="rn"><span>9</span></div>
<div class="cl" style="left:39px"></div>
<div class="cl" style="left:89px"></div>
<div class="cl" style="left:149px"></div>
<div class="cl" style="left:189px"></div>
<div class="cl" style="left:249px"></div>
<div class="cl" style="left:349px"></div>
<div class="cl" style="left:449px"></div>
<div class="cl" style="left:549px"></div>
<div class="cl" style="left:649px"></div>
<div class="cl" style="left:749px"></div>
<div class="cl" style="left:907px"></div>
</div>
<svg class="ic" style="left:275.2px;top:500.2px" width="19.5" height="19.5" viewBox="0 0 24 24"><path transform="rotate(45 12 12)" d="M16.5 6v11.5c0 2.21-1.79 4-4 4s-4-1.79-4-4V5c0-1.38 1.12-2.5 2.5-2.5s2.5 1.12 2.5 2.5v10.5c0 .55-.45 1-1 1s-1-.45-1-1V6H10v9.5c0 1.38 1.12 2.5 2.5 2.5s2.5-1.12 2.5-2.5V5c0-2.21-1.79-4-4-4S7 2.79 7 5v12.5c0 3.04 2.46 5.5 5.5 5.5s5.5-2.46 5.5-5.5V6h-1.5z" fill="#858585"/></svg>
<svg class="ic" style="left:333px;top:502px" width="14" height="14" viewBox="0 0 15 15"><rect x="0.75" y="0.75" width="13.5" height="13.5" rx="1.5" fill="#fff" stroke="#6e6e6e" stroke-width="1.3"/><rect x="1.2" y="1" width="12.6" height="3.2" fill="#0b2a73"/><path d="M3 1.6 V3.6 M5.6 1.6 V3.6 M8.2 1.6 V3.6 M10.8 1.6 V3.6" stroke="#dfe6f5" stroke-width="0.9"/></svg>
<svg class="ic" style="left:379px;top:502px" width="12" height="20" viewBox="0 0 12 20"><circle cx="6.1" cy="2.3" r="2.2" fill="#24384e"/><path d="M4.1 6.4 L7.3 5.9 L5.8 12.3 C5.7 12.9 6.1 13 8 12.3 L7.8 13.7 C6.1 15 4.1 15.7 2.6 15.6 C1.8 15.5 1.8 14.6 2.1 13.6 Z" fill="#24384e"/></svg>
<svg class="ic" style="left:415px;top:502px" width="18" height="17" viewBox="0 0 18 17"><path d="M0.4 9.7 C1.3 8.8 2.6 8.6 3.4 9.5 L4.6 11.4 C7.5 6.3 11.5 2.3 16.9 0 L17 0.4 C12.5 3.4 8.5 8.3 5.3 15 L3.8 15.1 C2.9 12.8 1.9 11.1 0.4 9.7 Z" fill="#000"/></svg>
<div class="tx" style="left:476px;top:503px;letter-spacing:-0.25px">Completed</div>
<div class="tx" style="left:576px;top:503px;letter-spacing:-0.05px">2024-08-23</div>
<div class="tx" style="left:676px;top:503px;letter-spacing:-0.05px">2024-08-22</div>
<div class="tx" style="left:876px;top:503px;letter-spacing:-0.3px">SM100092</div>
<div class="tx" style="left:976px;top:503px;letter-spacing:-0.35px">MD Maxsyn NEA4</div>
<div class="row alt" style="top:522px">
<div class="rn"><span>10</span></div>
<div class="cl" style="left:39px"></div>
<div class="cl" style="left:89px"></div>
<div class="cl" style="left:149px"></div>
<div class="cl" style="left:189px"></div>
<div class="cl" style="left:249px"></div>
<div class="cl" style="left:349px"></div>
<div class="cl" style="left:449px"></div>
<div class="cl" style="left:549px"></div>
<div class="cl" style="left:649px"></div>
<div class="cl" style="left:749px"></div>
<div class="cl" style="left:907px"></div>
</div>
<svg class="ic" style="left:275.2px;top:524.2px" width="19.5" height="19.5" viewBox="0 0 24 24"><path transform="rotate(45 12 12)" d="M16.5 6v11.5c0 2.21-1.79 4-4 4s-4-1.79-4-4V5c0-1.38 1.12-2.5 2.5-2.5s2.5 1.12 2.5 2.5v10.5c0 .55-.45 1-1 1s-1-.45-1-1V6H10v9.5c0 1.38 1.12 2.5 2.5 2.5s2.5-1.12 2.5-2.5V5c0-2.21-1.79-4-4-4S7 2.79 7 5v12.5c0 3.04 2.46 5.5 5.5 5.5s5.5-2.46 5.5-5.5V6h-1.5z" fill="#858585"/></svg>
<svg class="ic" style="left:333px;top:526px" width="14" height="14" viewBox="0 0 15 15"><rect x="0.75" y="0.75" width="13.5" height="13.5" rx="1.5" fill="#fff" stroke="#6e6e6e" stroke-width="1.3"/><rect x="1.2" y="1" width="12.6" height="3.2" fill="#0b2a73"/><path d="M3 1.6 V3.6 M5.6 1.6 V3.6 M8.2 1.6 V3.6 M10.8 1.6 V3.6" stroke="#dfe6f5" stroke-width="0.9"/></svg>
<svg class="ic" style="left:379px;top:526px" width="12" height="20" viewBox="0 0 12 20"><circle cx="6.1" cy="2.3" r="2.2" fill="#24384e"/><path d="M4.1 6.4 L7.3 5.9 L5.8 12.3 C5.7 12.9 6.1 13 8 12.3 L7.8 13.7 C6.1 15 4.1 15.7 2.6 15.6 C1.8 15.5 1.8 14.6 2.1 13.6 Z" fill="#24384e"/></svg>
<svg class="ic" style="left:415px;top:526px" width="18" height="17" viewBox="0 0 18 17"><path d="M0.4 9.7 C1.3 8.8 2.6 8.6 3.4 9.5 L4.6 11.4 C7.5 6.3 11.5 2.3 16.9 0 L17 0.4 C12.5 3.4 8.5 8.3 5.3 15 L3.8 15.1 C2.9 12.8 1.9 11.1 0.4 9.7 Z" fill="#000"/></svg>
<div class="tx" style="left:476px;top:527px;letter-spacing:-0.25px">Completed</div>
<div class="tx" style="left:576px;top:527px;letter-spacing:-0.05px">2024-08-23</div>
<div class="tx" style="left:676px;top:527px;letter-spacing:-0.05px">2024-08-22</div>
<div class="tx" style="left:876px;top:527px;letter-spacing:-0.3px">SM100093</div>
<div class="tx" style="left:976px;top:527px;letter-spacing:-0.35px">MD Rohan NEA2</div>
<div class="row wht" style="top:546px">
<div class="rn"><span>11</span></div>
<div class="cl" style="left:39px"></div>
<div class="cl" style="left:89px"></div>
<div class="cl" style="left:149px"></div>
<div class="cl" style="left:189px"></div>
<div class="cl" style="left:249px"></div>
<div class="cl" style="left:349px"></div>
<div class="cl" style="left:449px"></div>
<div class="cl" style="left:549px"></div>
<div class="cl" style="left:649px"></div>
<div class="cl" style="left:749px"></div>
<div class="cl" style="left:907px"></div>
</div>
<svg class="ic" style="left:275.2px;top:548.2px" width="19.5" height="19.5" viewBox="0 0 24 24"><path transform="rotate(45 12 12)" d="M16.5 6v11.5c0 2.21-1.79 4-4 4s-4-1.79-4-4V5c0-1.38 1.12-2.5 2.5-2.5s2.5 1.12 2.5 2.5v10.5c0 .55-.45 1-1 1s-1-.45-1-1V6H10v9.5c0 1.38 1.12 2.5 2.5 2.5s2.5-1.12 2.5-2.5V5c0-2.21-1.79-4-4-4S7 2.79 7 5v12.5c0 3.04 2.46 5.5 5.5 5.5s5.5-2.46 5.5-5.5V6h-1.5z" fill="#858585"/></svg>
<svg class="ic" style="left:333px;top:550px" width="14" height="14" viewBox="0 0 15 15"><rect x="0.75" y="0.75" width="13.5" height="13.5" rx="1.5" fill="#fff" stroke="#6e6e6e" stroke-width="1.3"/><rect x="1.2" y="1" width="12.6" height="3.2" fill="#0b2a73"/><path d="M3 1.6 V3.6 M5.6 1.6 V3.6 M8.2 1.6 V3.6 M10.8 1.6 V3.6" stroke="#dfe6f5" stroke-width="0.9"/></svg>
<svg class="ic" style="left:379px;top:550px" width="12" height="20" viewBox="0 0 12 20"><circle cx="6.1" cy="2.3" r="2.2" fill="#24384e"/><path d="M4.1 6.4 L7.3 5.9 L5.8 12.3 C5.7 12.9 6.1 13 8 12.3 L7.8 13.7 C6.1 15 4.1 15.7 2.6 15.6 C1.8 15.5 1.8 14.6 2.1 13.6 Z" fill="#24384e"/></svg>
<svg class="ic" style="left:415px;top:550px" width="18" height="17" viewBox="0 0 18 17"><path d="M0.4 9.7 C1.3 8.8 2.6 8.6 3.4 9.5 L4.6 11.4 C7.5 6.3 11.5 2.3 16.9 0 L17 0.4 C12.5 3.4 8.5 8.3 5.3 15 L3.8 15.1 C2.9 12.8 1.9 11.1 0.4 9.7 Z" fill="#000"/></svg>
<div class="tx" style="left:476px;top:551px;letter-spacing:-0.25px">Completed</div>
<div class="tx" style="left:576px;top:551px;letter-spacing:-0.05px">2024-08-23</div>
<div class="tx" style="left:676px;top:551px;letter-spacing:-0.05px">2024-08-22</div>
<div class="tx" style="left:876px;top:551px;letter-spacing:-0.3px">SM100094</div>
<div class="tx" style="left:976px;top:551px;letter-spacing:-0.35px">MD Rohn NEA2</div>
<div class="row alt" style="top:570px">
<div class="rn"><span>12</span></div>
<div class="cl" style="left:39px"></div>
<div class="cl" style="left:89px"></div>
<div class="cl" style="left:149px"></div>
<div class="cl" style="left:189px"></div>
<div class="cl" style="left:249px"></div>
<div class="cl" style="left:349px"></div>
<div class="cl" style="left:449px"></div>
<div class="cl" style="left:549px"></div>
<div class="cl" style="left:649px"></div>
<div class="cl" style="left:749px"></div>
<div class="cl" style="left:907px"></div>
</div>
<svg class="ic" style="left:275.2px;top:572.2px" width="19.5" height="19.5" viewBox="0 0 24 24"><path transform="rotate(45 12 12)" d="M16.5 6v11.5c0 2.21-1.79 4-4 4s-4-1.79-4-4V5c0-1.38 1.12-2.5 2.5-2.5s2.5 1.12 2.5 2.5v10.5c0 .55-.45 1-1 1s-1-.45-1-1V6H10v9.5c0 1.38 1.12 2.5 2.5 2.5s2.5-1.12 2.5-2.5V5c0-2.21-1.79-4-4-4S7 2.79 7 5v12.5c0 3.04 2.46 5.5 5.5 5.5s5.5-2.46 5.5-5.5V6h-1.5z" fill="#858585"/></svg>
<svg class="ic" style="left:333px;top:574px" width="14" height="14" viewBox="0 0 15 15"><rect x="0.75" y="0.75" width="13.5" height="13.5" rx="1.5" fill="#fff" stroke="#6e6e6e" stroke-width="1.3"/><rect x="1.2" y="1" width="12.6" height="3.2" fill="#0b2a73"/><path d="M3 1.6 V3.6 M5.6 1.6 V3.6 M8.2 1.6 V3.6 M10.8 1.6 V3.6" stroke="#dfe6f5" stroke-width="0.9"/></svg>
<svg class="ic" style="left:379px;top:574px" width="12" height="20" viewBox="0 0 12 20"><circle cx="6.1" cy="2.3" r="2.2" fill="#24384e"/><path d="M4.1 6.4 L7.3 5.9 L5.8 12.3 C5.7 12.9 6.1 13 8 12.3 L7.8 13.7 C6.1 15 4.1 15.7 2.6 15.6 C1.8 15.5 1.8 14.6 2.1 13.6 Z" fill="#24384e"/></svg>
<svg class="ic" style="left:415px;top:574px" width="18" height="17" viewBox="0 0 18 17"><path d="M0.4 9.7 C1.3 8.8 2.6 8.6 3.4 9.5 L4.6 11.4 C7.5 6.3 11.5 2.3 16.9 0 L17 0.4 C12.5 3.4 8.5 8.3 5.3 15 L3.8 15.1 C2.9 12.8 1.9 11.1 0.4 9.7 Z" fill="#000"/></svg>
<div class="tx" style="left:476px;top:575px;letter-spacing:-0.25px">Completed</div>
<div class="tx" style="left:576px;top:575px;letter-spacing:-0.05px">2024-08-23</div>
<div class="tx" style="left:676px;top:575px;letter-spacing:-0.05px">2024-08-22</div>
<div class="tx" style="left:876px;top:575px;letter-spacing:-0.3px">SM100095</div>
<div class="tx" style="left:976px;top:575px;letter-spacing:-0.35px">MD Rohan NEA2</div>
<div class="row wht" style="top:594px">
<div class="rn"><span>13</span></div>
<div class="cl" style="left:39px"></div>
<div class="cl" style="left:89px"></div>
<div class="cl" style="left:149px"></div>
<div class="cl" style="left:189px"></div>
<div class="cl" style="left:249px"></div>
<div class="cl" style="left:349px"></div>
<div class="cl" style="left:449px"></div>
<div class="cl" style="left:549px"></div>
<div class="cl" style="left:649px"></div>
<div class="cl" style="left:749px"></div>
<div class="cl" style="left:907px"></div>
</div>
<svg class="ic" style="left:275.2px;top:596.2px" width="19.5" height="19.5" viewBox="0 0 24 24"><path transform="rotate(45 12 12)" d="M16.5 6v11.5c0 2.21-1.79 4-4 4s-4-1.79-4-4V5c0-1.38 1.12-2.5 2.5-2.5s2.5 1.12 2.5 2.5v10.5c0 .55-.45 1-1 1s-1-.45-1-1V6H10v9.5c0 1.38 1.12 2.5 2.5 2.5s2.5-1.12 2.5-2.5V5c0-2.21-1.79-4-4-4S7 2.79 7 5v12.5c0 3.04 2.46 5.5 5.5 5.5s5.5-2.46 5.5-5.5V6h-1.5z" fill="#858585"/></svg>
<svg class="ic" style="left:333px;top:598px" width="14" height="14" viewBox="0 0 15 15"><rect x="0.75" y="0.75" width="13.5" height="13.5" rx="1.5" fill="#fff" stroke="#6e6e6e" stroke-width="1.3"/><rect x="1.2" y="1" width="12.6" height="3.2" fill="#0b2a73"/><path d="M3 1.6 V3.6 M5.6 1.6 V3.6 M8.2 1.6 V3.6 M10.8 1.6 V3.6" stroke="#dfe6f5" stroke-width="0.9"/></svg>
<svg class="ic" style="left:379px;top:598px" width="12" height="20" viewBox="0 0 12 20"><circle cx="6.1" cy="2.3" r="2.2" fill="#24384e"/><path d="M4.1 6.4 L7.3 5.9 L5.8 12.3 C5.7 12.9 6.1 13 8 12.3 L7.8 13.7 C6.1 15 4.1 15.7 2.6 15.6 C1.8 15.5 1.8 14.6 2.1 13.6 Z" fill="#24384e"/></svg>
<svg class="ic" style="left:415px;top:598px" width="18" height="17" viewBox="0 0 18 17"><path d="M0.4 9.7 C1.3 8.8 2.6 8.6 3.4 9.5 L4.6 11.4 C7.5 6.3 11.5 2.3 16.9 0 L17 0.4 C12.5 3.4 8.5 8.3 5.3 15 L3.8 15.1 C2.9 12.8 1.9 11.1 0.4 9.7 Z" fill="#000"/></svg>
<div class="tx" style="left:476px;top:599px;letter-spacing:-0.25px">Completed</div>
<div class="tx" style="left:576px;top:599px;letter-spacing:-0.05px">2024-08-23</div>
<div class="tx" style="left:676px;top:599px;letter-spacing:-0.05px">2024-08-22</div>
<div class="tx" style="left:876px;top:599px;letter-spacing:-0.3px">SM100097</div>
<div class="tx" style="left:976px;top:599px;letter-spacing:-0.35px">MD Array NEA2</div>
<div class="row alt" style="top:618px">
<div class="rn"><span>14</span></div>
<div class="cl" style="left:39px"></div>
<div class="cl" style="left:89px"></div>
<div class="cl" style="left:149px"></div>
<div class="cl" style="left:189px"></div>
<div class="cl" style="left:249px"></div>
<div class="cl" style="left:349px"></div>
<div class="cl" style="left:449px"></div>
<div class="cl" style="left:549px"></div>
<div class="cl" style="left:649px"></div>
<div class="cl" style="left:749px"></div>
<div class="cl" style="left:907px"></div>
</div>
<svg class="ic" style="left:275.2px;top:620.2px" width="19.5" height="19.5" viewBox="0 0 24 24"><path transform="rotate(45 12 12)" d="M16.5 6v11.5c0 2.21-1.79 4-4 4s-4-1.79-4-4V5c0-1.38 1.12-2.5 2.5-2.5s2.5 1.12 2.5 2.5v10.5c0 .55-.45 1-1 1s-1-.45-1-1V6H10v9.5c0 1.38 1.12 2.5 2.5 2.5s2.5-1.12 2.5-2.5V5c0-2.21-1.79-4-4-4S7 2.79 7 5v12.5c0 3.04 2.46 5.5 5.5 5.5s5.5-2.46 5.5-5.5V6h-1.5z" fill="#858585"/></svg>
<svg class="ic" style="left:333px;top:622px" width="14" height="14" viewBox="0 0 15 15"><rect x="0.75" y="0.75" width="13.5" height="13.5" rx="1.5" fill="#fff" stroke="#6e6e6e" stroke-width="1.3"/><rect x="1.2" y="1" width="12.6" height="3.2" fill="#0b2a73"/><path d="M3 1.6 V3.6 M5.6 1.6 V3.6 M8.2 1.6 V3.6 M10.8 1.6 V3.6" stroke="#dfe6f5" stroke-width="0.9"/></svg>
<svg class="ic" style="left:379px;top:622px" width="12" height="20" viewBox="0 0 12 20"><circle cx="6.1" cy="2.3" r="2.2" fill="#24384e"/><path d="M4.1 6.4 L7.3 5.9 L5.8 12.3 C5.7 12.9 6.1 13 8 12.3 L7.8 13.7 C6.1 15 4.1 15.7 2.6 15.6 C1.8 15.5 1.8 14.6 2.1 13.6 Z" fill="#24384e"/></svg>
<svg class="ic" style="left:415px;top:622px" width="18" height="17" viewBox="0 0 18 17"><path d="M0.4 9.7 C1.3 8.8 2.6 8.6 3.4 9.5 L4.6 11.4 C7.5 6.3 11.5 2.3 16.9 0 L17 0.4 C12.5 3.4 8.5 8.3 5.3 15 L3.8 15.1 C2.9 12.8 1.9 11.1 0.4 9.7 Z" fill="#000"/></svg>
<div class="tx" style="left:476px;top:623px;letter-spacing:-0.25px">Completed</div>
<div class="tx" style="left:576px;top:623px;letter-spacing:-0.05px">2024-08-26</div>
<div class="tx" style="left:676px;top:623px;letter-spacing:-0.05px">2024-08-26</div>
<div class="tx" style="left:876px;top:623px;letter-spacing:-0.3px">SM100098</div>
<div class="tx" style="left:976px;top:623px;letter-spacing:-0.35px">MD Shogun NEA</div>
<div class="row wht" style="top:642px">
<div class="rn"><span>15</span></div>
<div class="cl" style="left:39px"></div>
<div class="cl" style="left:89px"></div>
<div class="cl" style="left:149px"></div>
<div class="cl" style="left:189px"></div>
<div class="cl" style="left:249px"></div>
<div class="cl" style="left:349px"></div>
<div class="cl" style="left:449px"></div>
<div class="cl" style="left:549px"></div>
<div class="cl" style="left:649px"></div>
<div class="cl" style="left:749px"></div>
<div class="cl" style="left:907px"></div>
</div>
<svg class="ic" style="left:275.2px;top:644.2px" width="19.5" height="19.5" viewBox="0 0 24 24"><path transform="rotate(45 12 12)" d="M16.5 6v11.5c0 2.21-1.79 4-4 4s-4-1.79-4-4V5c0-1.38 1.12-2.5 2.5-2.5s2.5 1.12 2.5 2.5v10.5c0 .55-.45 1-1 1s-1-.45-1-1V6H10v9.5c0 1.38 1.12 2.5 2.5 2.5s2.5-1.12 2.5-2.5V5c0-2.21-1.79-4-4-4S7 2.79 7 5v12.5c0 3.04 2.46 5.5 5.5 5.5s5.5-2.46 5.5-5.5V6h-1.5z" fill="#858585"/></svg>
<svg class="ic" style="left:333px;top:646px" width="14" height="14" viewBox="0 0 15 15"><rect x="0.75" y="0.75" width="13.5" height="13.5" rx="1.5" fill="#fff" stroke="#6e6e6e" stroke-width="1.3"/><rect x="1.2" y="1" width="12.6" height="3.2" fill="#0b2a73"/><path d="M3 1.6 V3.6 M5.6 1.6 V3.6 M8.2 1.6 V3.6 M10.8 1.6 V3.6" stroke="#dfe6f5" stroke-width="0.9"/></svg>
<svg class="ic" style="left:379px;top:646px" width="12" height="20" viewBox="0 0 12 20"><circle cx="6.1" cy="2.3" r="2.2" fill="#24384e"/><path d="M4.1 6.4 L7.3 5.9 L5.8 12.3 C5.7 12.9 6.1 13 8 12.3 L7.8 13.7 C6.1 15 4.1 15.7 2.6 15.6 C1.8 15.5 1.8 14.6 2.1 13.6 Z" fill="#24384e"/></svg>
<svg class="ic" style="left:415px;top:646px" width="18" height="17" viewBox="0 0 18 17"><path d="M0.4 9.7 C1.3 8.8 2.6 8.6 3.4 9.5 L4.6 11.4 C7.5 6.3 11.5 2.3 16.9 0 L17 0.4 C12.5 3.4 8.5 8.3 5.3 15 L3.8 15.1 C2.9 12.8 1.9 11.1 0.4 9.7 Z" fill="#000"/></svg>
<div class="tx" style="left:476px;top:647px;letter-spacing:-0.25px">Completed</div>
<div class="tx" style="left:576px;top:647px;letter-spacing:-0.05px">2024-08-26</div>
<div class="tx" style="left:676px;top:647px;letter-spacing:-0.05px">2024-08-26</div>
<div class="tx" style="left:876px;top:647px;letter-spacing:-0.3px">SM100099</div>
<div class="tx" style="left:976px;top:647px;letter-spacing:-0.35px">MD Array NEA2</div>
<div class="a" style="left:220px;top:306px;width:1103px;height:25px;border-top:1px dotted #8eaee8;border-bottom:1px dotted #8eaee8"></div>
<div class="a" style="left:259px;top:306px;width:1px;height:25px;border-left:1px dotted #8eaee8"></div>
<!-- callouts -->
<div class="rbox" style="left:451px;top:24px;width:89px;height:38px"></div>
<div class="co" style="left:539px;top:21px">G</div>
<div class="co" style="left:304px;top:106px">E</div>
<div class="co" style="left:799px;top:107px">F</div>
<div class="co" style="left:486px;top:247px">A</div>
<div class="co" style="left:691px;top:248px">B</div>
<div class="co" style="left:806px;top:241px">C</div>
<div class="co" style="left:1153px;top:245px">D</div>
</body></html>
